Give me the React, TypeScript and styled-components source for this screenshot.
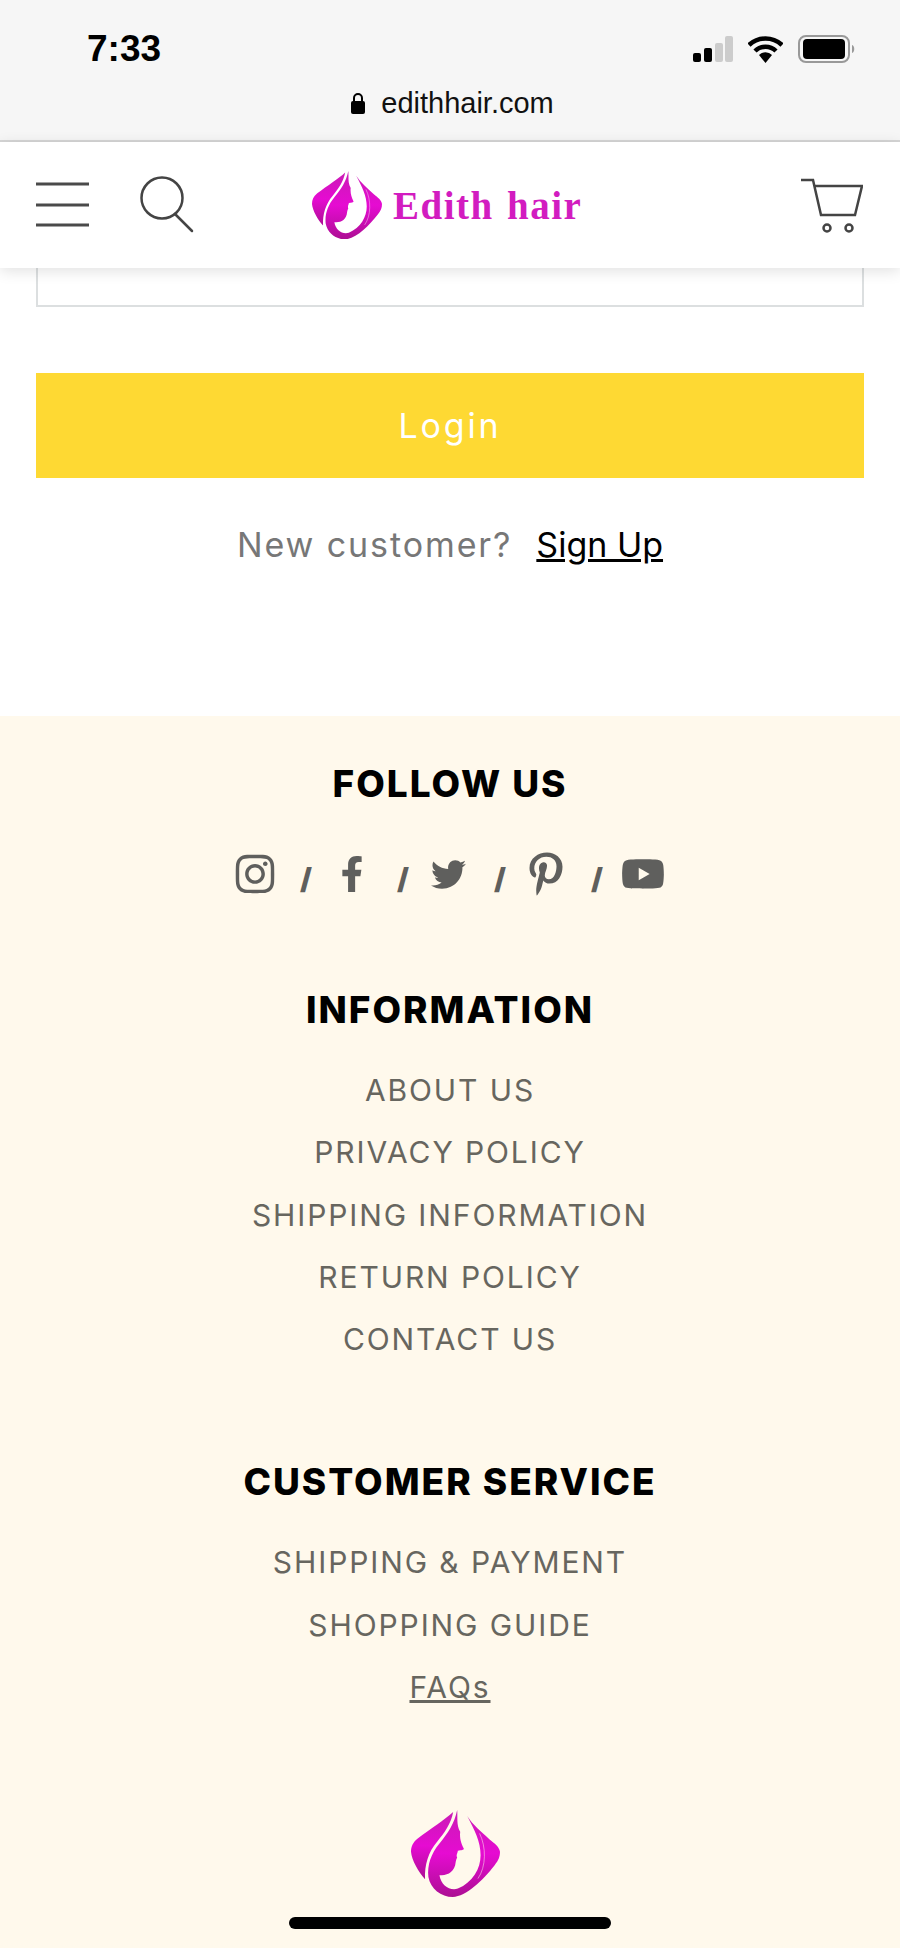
import styled, { createGlobalStyle } from 'styled-components';
import { FaFacebookF, FaInstagram, FaPinterestP, FaTwitter, FaYoutube } from 'react-icons/fa';

const GlobalStyle = createGlobalStyle`
  html, body {
    margin: 0;
    padding: 0;
    background: #fff;
  }
  body {
    font-family: Inter, "Liberation Sans", sans-serif;
  }
`;

const Page = styled.div`
  width: 900px;
  height: 1948px;
  overflow: hidden;
  position: relative;
  background: #fff;
`;

// Browser chrome
const BrowserBar = styled.div`
  height: 142px;
  box-sizing: border-box;
  background: #f6f6f6;
  border-bottom: 2px solid #d6d6d6;
  padding-top: 28px;
`;

const StatusRow = styled.div`
  display: flex;
  justify-content: space-between;
  align-items: center;
  height: 42px;
  padding: 0 44px 0 87px;
`;

const Clock = styled.span`
  font-family: "Liberation Sans", sans-serif;
  font-size: 37px;
  font-weight: 700;
  color: #000;
`;

const StatusIcons = styled.div`
  display: flex;
  align-items: center;
  gap: 15px;
`;

const UrlRow = styled.div`
  display: flex;
  justify-content: center;
  align-items: center;
  gap: 15px;
  margin-top: 18px;
  padding-left: 4px;
  height: 30px;
  font-family: "Liberation Sans", sans-serif;
  font-size: 29px;
  color: #111;
`;

// Shop header
const Header = styled.header`
  height: 126px;
  box-sizing: border-box;
  position: relative;
  z-index: 2;
  background: #fff;
  box-shadow: 0 3px 14px rgba(0, 0, 0, 0.12);
  display: flex;
  align-items: center;
  padding: 0 36px;
`;

const HeaderLeft = styled.div`
  display: flex;
  align-items: center;
  gap: 50px;
  width: 276px;
`;

const LogoWrap = styled.div`
  display: flex;
  align-items: center;
  gap: 11px;
`;

const LogoText = styled.span`
  font-family: "Liberation Serif", serif;
  font-size: 39px;
  font-weight: 700;
  letter-spacing: 1.5px;
  word-spacing: 2px;
  color: #d21cc0;
`;

const CartButton = styled.div`
  margin-left: auto;
  margin-right: 1px;
  display: flex;
`;

// Login form remainder
const Main = styled.main`
  padding: 0 36px;
  height: 448px;
`;

const InputBox = styled.div`
  height: 39px;
  box-sizing: border-box;
  border: 2px solid #dcdfe0;
  border-top: none;
`;

const LoginButton = styled.button`
  display: block;
  width: 100%;
  height: 105px;
  margin-top: 66px;
  border: none;
  background: #fed933;
  color: #fff;
  font-family: inherit;
  font-size: 34px;
  letter-spacing: 2.8px;
`;

const SignUpRow = styled.p`
  margin: 47px 0 0;
  text-align: center;
  font-size: 34px;
  line-height: 40px;
  letter-spacing: 1.9px;
  color: #777;
`;

const SignUpLink = styled.a`
  margin-left: 24px;
  color: #000;
  letter-spacing: 0;
  text-decoration: underline;
`;

// Footer
const Footer = styled.footer`
  height: 1232px;
  background: #fff9ec;
  text-align: center;
  padding-top: 43px;
  box-sizing: border-box;
`;

const FooterTitle = styled.h3<{ $gap?: number }>`
  margin: ${(p) => p.$gap ?? 0}px 0 0;
  font-size: 37px;
  line-height: 50px;
  font-weight: 800;
  letter-spacing: 2px;
  color: #000;
`;

const SocialRow = styled.div`
  display: flex;
  justify-content: center;
  align-items: center;
  margin: 40px 0 0 -3px;
  height: 50px;
  color: #5f5f5d;
`;

const SocialIcon = styled.span`
  display: flex;
  justify-content: center;
  width: 44px;
`;

const Slash = styled.span`
  width: 12px;
  margin: 8px 17.5px 0 23.5px;
  font-size: 29px;
  font-weight: 900;
`;

const LinkList = styled.ul`
  list-style: none;
  margin: 24px 0 0;
  padding: 0;
`;

const LinkItem = styled.li<{ $underline?: boolean }>`
  font-size: 30px;
  line-height: 62.3px;
  letter-spacing: 1.9px;
  color: #67665f;
  text-decoration: ${(p) => (p.$underline ? 'underline' : 'none')};
`;

const FooterLogo = styled.div`
  display: flex;
  justify-content: center;
  margin-top: 92px;
  padding-left: 10px;
`;

const HomeIndicator = styled.div`
  position: absolute;
  left: 289px;
  bottom: 19px;
  width: 322px;
  height: 12px;
  border-radius: 6px;
  background: #000;
`;

function LogoMark({ width, knock, id }: { width: number; knock: string; id: string }) {
  return (
    <svg width={width} height={(width * 260) / 266} viewBox="0 0 266 260">
      <defs>
        <linearGradient id={id} x1="0" y1="0" x2="0" y2="1">
          <stop offset="0" stopColor="#c91cb4" />
          <stop offset="0.5" stopColor="#e60bd2" />
          <stop offset="1" stopColor="#ac0f93" />
        </linearGradient>
      </defs>
      <path
        d="M126 6 C100 30 60 55 20 85 C5 97 0 110 0 125 C2 150 22 185 42 207 C40 165 52 125 78 95 C100 68 120 40 126 6Z"
        fill={`url(#${id})`}
      />
      <path
        d="M138 0 C130 40 110 70 85 100 C60 130 48 165 52 200 C58 235 90 260 125 260 C165 258 215 210 250 165 C262 150 266 140 266 125 C264 110 250 100 235 88 C210 65 185 45 168 18 C190 60 208 95 208 135 C208 175 185 215 140 235 C115 242 90 225 85 195 C105 195 125 190 132 165 C134 155 134 150 138 142 C134 135 140 128 140 122 C150 120 158 120 158 116 C150 100 145 85 147 65 C135 45 140 20 138 0Z"
        fill={`url(#${id})`}
      />
      <path d="M205 70 C225 110 225 170 200 205" fill="none" stroke={knock} strokeWidth="2.5" opacity="0.6" />
    </svg>
  );
}

export default function App() {
  return (
    <Page>
      <GlobalStyle />
      <BrowserBar>
        <StatusRow>
          <Clock>7:33</Clock>
          <StatusIcons>
            <svg width="40" height="26" viewBox="0 0 40 26">
              <rect x="0" y="17" width="8" height="9" rx="2" fill="#000" />
              <rect x="11" y="12" width="8" height="14" rx="2" fill="#000" />
              <rect x="22" y="7" width="8" height="19" rx="2" fill="#ccc" />
              <rect x="32" y="0" width="8" height="26" rx="2" fill="#ccc" />
            </svg>
            <svg width="35" height="27" viewBox="0 0 35 27">
              <path d="M1 9 A24 24 0 0 1 34 9" fill="none" stroke="#000" strokeWidth="4.5" />
              <path d="M7 15 A15 15 0 0 1 28 15" fill="none" stroke="#000" strokeWidth="4.5" />
              <path d="M11 19 L17.5 27 L24 19 A9 9 0 0 0 11 19Z" fill="#000" />
            </svg>
            <svg width="58" height="28" viewBox="0 0 58 28">
              <rect x="1" y="1" width="50" height="26" rx="7" fill="none" stroke="#999" strokeWidth="2" />
              <rect x="5" y="4" width="42" height="20" rx="4" fill="#000" />
              <path d="M54 10 C57 11 57 17 54 18Z" fill="#999" />
            </svg>
          </StatusIcons>
        </StatusRow>
        <UrlRow>
          <svg width="16" height="22" viewBox="0 0 16 22">
            <path d="M4 10 V6 a4 4 0 0 1 8 0 V10" fill="none" stroke="#000" strokeWidth="2" />
            <rect x="1" y="9" width="14" height="13" rx="2" fill="#000" />
          </svg>
          <span>edithhair.com</span>
        </UrlRow>
      </BrowserBar>

      <Header>
        <HeaderLeft>
          <svg width="54" height="46" viewBox="0 0 54 46">
            <path d="M0 2 H53 M0 23 H53 M0 43 H53" stroke="#4a4a4a" strokeWidth="3" />
          </svg>
          <svg width="56" height="58" viewBox="0 0 56 58">
            <circle cx="22" cy="22" r="20.5" fill="none" stroke="#444" strokeWidth="2.5" />
            <path d="M35 38 L52 55" stroke="#444" strokeWidth="2.5" strokeLinecap="round" />
          </svg>
        </HeaderLeft>
        <LogoWrap>
          <LogoMark width={70} knock="#fff" id="logoHeader" />
          <LogoText>Edith hair</LogoText>
        </LogoWrap>
        <CartButton>
          <svg width="62" height="55" viewBox="0 0 62 55">
            <path d="M0 2 H12 L20 37 H54 L61 8 H13.5" fill="none" stroke="#444" strokeWidth="2.5" />
            <circle cx="26" cy="50" r="3.5" fill="none" stroke="#444" strokeWidth="2.5" />
            <circle cx="48" cy="50" r="3.5" fill="none" stroke="#444" strokeWidth="2.5" />
          </svg>
        </CartButton>
      </Header>

      <Main>
        <InputBox />
        <LoginButton>Login</LoginButton>
        <SignUpRow>
          New customer?<SignUpLink>Sign Up</SignUpLink>
        </SignUpRow>
      </Main>

      <Footer>
        <FooterTitle>FOLLOW US</FooterTitle>
        <SocialRow>
          <SocialIcon><FaInstagram size={44} /></SocialIcon>
          <Slash>/</Slash>
          <SocialIcon><FaFacebookF size={36} /></SocialIcon>
          <Slash>/</Slash>
          <SocialIcon><FaTwitter size={35} /></SocialIcon>
          <Slash>/</Slash>
          <SocialIcon><FaPinterestP size={44} /></SocialIcon>
          <Slash>/</Slash>
          <SocialIcon><FaYoutube size={44} /></SocialIcon>
        </SocialRow>
        <FooterTitle $gap={86}>INFORMATION</FooterTitle>
        <LinkList>
          <LinkItem>ABOUT US</LinkItem>
          <LinkItem>PRIVACY POLICY</LinkItem>
          <LinkItem>SHIPPING INFORMATION</LinkItem>
          <LinkItem>RETURN POLICY</LinkItem>
          <LinkItem>CONTACT US</LinkItem>
        </LinkList>
        <FooterTitle $gap={87}>CUSTOMER SERVICE</FooterTitle>
        <LinkList>
          <LinkItem>SHIPPING &amp; PAYMENT</LinkItem>
          <LinkItem>SHOPPING GUIDE</LinkItem>
          <LinkItem $underline>FAQs</LinkItem>
        </LinkList>
        <FooterLogo>
          <LogoMark width={89} knock="#fff9ec" id="logoFooter" />
        </FooterLogo>
      </Footer>
      <HomeIndicator />
    </Page>
  );
}
